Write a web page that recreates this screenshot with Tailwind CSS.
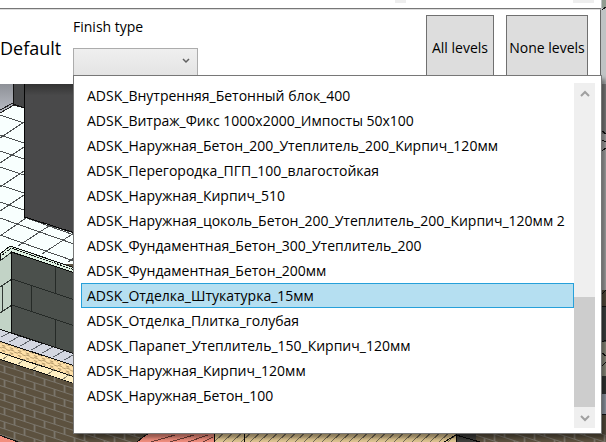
<!DOCTYPE html>
<html lang="ru">
<head>
<meta charset="utf-8">
<meta name="viewport" content="width=device-width, initial-scale=1">
<title>Finish type</title>
<script src="https://cdn.jsdelivr.net/npm/@tailwindcss/browser@4"></script>
</head>
<body class="bg-[#5f5544] font-['Open_Sans','Noto_Sans',sans-serif] text-black">
<main class="relative isolate min-h-screen overflow-hidden pr-[5px]">
  <!-- Model view behind the panel -->
  <svg class="absolute inset-0 -z-10 h-full w-full" viewBox="0 0 606 442" preserveAspectRatio="xMinYMin slice" aria-hidden="true" shape-rendering="crispEdges">
    <defs>
      <linearGradient id="wall" x1="0" y1="0" x2="0" y2="1"><stop offset="0" stop-color="#8e9197"/><stop offset="1" stop-color="#b9bcc5"/></linearGradient>
      <linearGradient id="edge" x1="0" y1="0" x2="0" y2="1"><stop offset="0" stop-color="#333"/><stop offset="1" stop-color="#4a4a4b"/></linearGradient>
      <pattern id="brick" width="20" height="14" patternUnits="userSpaceOnUse" patternTransform="skewY(18)"><path fill="#5c513f" d="M0 0h20v14H0z"/><path fill="none" stroke="#7a756b" d="M0 .5h20M0 7.500h20M4.500 0v7M14.500 7v7"/></pattern>
      <pattern id="hatch" width="9" height="8" patternUnits="userSpaceOnUse"><path stroke="#776d57" d="M0 8L9 0" fill="none"/></pattern>
      <pattern id="sand" width="8" height="5" patternUnits="userSpaceOnUse" patternTransform="skewY(18)"><path stroke="#b79c6d" d="M0 3L4 1L8 3M2 4h3" fill="none"/></pattern>
    </defs>
    <path fill="#f8fffe" d="M0 84h76v180H0z"/>
    <path fill="none" stroke="#4d5152" d="M0 115l24 8M0 135l24 8M0 151l24 8M0 167l24 8M0 185l24 8M0 202l24 8M0 218l74 26M0 235l74 26M24 217l50 18M48 225l26 8M0 138l24-16M0 163l24-16M0 187l24-16M0 211l24-16M0 236l26-18M18 246l31-20M42 254l32-21M68 262l6-4"/>
    <path fill="url(#wall)" d="M0 84h13v21L0 113z"/>
    <path fill="none" stroke="#222" d="M0 113l14-8 10 3M0 110l13-7"/>
    <path fill="#464748" stroke="#111" d="M13.500 83v21l11 4V83z"/>
    <path fill="#49494a" stroke="#050505" d="M24.500 83v134L75 233V83z"/>
    <path fill="url(#edge)" d="M25 84h49v12H25z"/>
    <path fill="#def0e1" stroke="#111" d="M0 254l10-8 65 22v7L12 252 0 261z"/>
    <path fill="none" stroke="#111" stroke-dasharray="2 1" d="M0 257l11-9 64 22"/>
    <path fill="#c2d3c6" d="M0 261l12-9v81L0 329z"/>
    <path fill="none" stroke="#303733" d="M0 287l12-8M2.500 285v26M0 313l12-8M0 261l12-9"/>
    <path fill="#4b504c" stroke="#080908" d="M11.500 252L75 273v81l-63.500-21z"/>
    <path fill="none" stroke="#252a27" d="M12 279l63 21M12 305l63 21M55.500 267v27M31.500 286v26M55.500 320v27"/>
    <path fill="#d4d7e1" stroke="#111" d="M-1 329l76 25v12L-1 341z"/>
    <path fill="none" stroke="#60656c" d="M1 337l8-4M9 342l11-6M20 346l11-6M31 350l11-6M42 353l11-6M53 357l11-6M64 360l11-6"/>
    <path fill="#ffe0a8" stroke="#111" d="M-1 341l76 25v11L-1 352z"/>
    <path fill="url(#sand)" d="M0 342l75 25v9L0 351z"/>
    <path fill="#ffefc2" stroke="#111" d="M-1 352l76 25v7L-1 359z"/>
    <path fill="none" stroke="#8c856f" d="M3 359l7-5M18 364l7-5M33 369l7-5M48 374l7-5M63 379l7-5"/>
    <path fill="url(#brick)" d="M0 360l75 24v40h80v18H0z"/>
    <path fill="#f28f7e" stroke="#111" d="M-1 435l22 8H-1z"/>
    <path fill="#f28f7e" stroke="#111" d="M136 443q6-6 13-10h65v10z"/>
    <path fill="none" stroke="#6d3d35" d="M151 442l24-7M170 442l24-7M188 442l20-7M203 442l10-5"/>
    <path fill="#dfc691" d="M215 432h242v10H215z"/>
    <path fill="url(#hatch)" d="M215 432h242v10H215z"/>
    <path fill="#3f3f3c" d="M456 432h25v10h-25z"/>
    <path fill="url(#brick)" d="M476 434h130v8H476z"/>
    <path fill="none" stroke="#080808" d="M214.500 434v8M244.500 434v8M456.500 434v8M444 442l12-7 24 7"/>
    <path fill="#bfc3c4" d="M601 0h5v130h-5z"/>
    <path fill="#919d91" d="M602 0h4v8h-4z"/>
    <path fill="#8c8c8c" d="M602 84h4v50h-4z"/>
    <path fill="#b9b9b9" d="M602 134h4v156h-4z"/>
    <path fill="#444a48" d="M602 306h4v36h-4z"/>
    <path fill="#9d9e8c" d="M602 342h4v34h-4z"/>
    <path fill="#383a39" d="M602 376h4v18h-4z"/>
    <path fill="#a5adba" d="M602 394h4v20h-4z"/>
    <path stroke="#111" fill="none" d="M602 10l4-3M602 131l4 3M602 140l4 2M602 151l4-3M602 294l4-4M602 306h4M602 342l4-2M602 353l4 3M602 366l4-4M602 414h4"/>
  </svg>

  <div class="flex h-[9px] justify-end gap-[167px] border-b border-[#777] bg-white pr-[7px]">
    <span class="h-[3px] w-[11px] bg-[#eee]"></span>
    <span class="h-[3px] w-[21px] bg-[#eee]"></span>
  </div>
  <header class="flex h-[75px] border-r border-t border-r-[#666] border-t-[#ddd] bg-white">
    <p class="w-[73px] shrink-0 pt-[26px] text-[18px] leading-6">Default</p>
    <div class="flex w-[125px] flex-col gap-[11px] pt-[7px]">
      <label for="finish" class="text-[14px] leading-5">Finish type</label>
      <div class="relative">
        <select id="finish" class="block h-7 w-full appearance-none border border-[#acacac] bg-linear-to-b from-[#efefef] to-[#e4e4e4]"><option></option></select>
        <svg class="pointer-events-none absolute right-2 top-[10px] h-[6px] w-2" viewBox="0 0 8 6" fill="none" stroke="#606060" stroke-width="1.500" aria-hidden="true"><path d="M1 1l3 3 3-3"/></svg>
      </div>
    </div>
    <div class="ml-auto flex gap-3 pr-3 pt-[5px]">
      <button class="h-[65px] w-[68px] whitespace-nowrap border border-[#707070] bg-[#ddd] text-[14px]">All levels</button>
      <button class="flex h-[65px] w-[82px] items-center justify-center whitespace-nowrap border border-[#707070] bg-[#ddd] text-[14px]">None levels</button>
    </div>
  </header>

  <!-- Open list of the Finish type box -->
  <div class="absolute left-[73px] right-1 top-[75px] flex border border-[#777] bg-white pb-[5px] pl-[7px] pr-[6px] pt-[7px] shadow-[4px_4px_4px_rgba(0,0,0,0.4)]">
    <div role="listbox" aria-label="Finish type" class="flex min-w-0 grow flex-col pb-5 text-[14px] leading-[23px] *:block *:w-full *:overflow-hidden *:whitespace-nowrap *:border *:px-[5px] *:text-left">
      <button role="option" class="border-transparent">ADSK_Внутренняя_Бетонный блок_400</button>
      <button role="option" class="border-transparent">ADSK_Витраж_Фикс 1000x2000_Импосты 50x100</button>
      <button role="option" class="border-transparent">ADSK_Наружная_Бетон_200_Утеплитель_200_Кирпич_120мм</button>
      <button role="option" class="border-transparent">ADSK_Перегородка_ПГП_100_влагостойкая</button>
      <button role="option" class="border-transparent">ADSK_Наружная_Кирпич_510</button>
      <button role="option" class="border-transparent">ADSK_Наружная_цоколь_Бетон_200_Утеплитель_200_Кирпич_120мм 2</button>
      <button role="option" class="border-transparent">ADSK_Фундаментная_Бетон_300_Утеплитель_200</button>
      <button role="option" class="border-transparent">ADSK_Фундаментная_Бетон_200мм</button>
      <button role="option" aria-selected="true" class="border-[#26a0da] bg-[#b5dff1]">ADSK_Отделка_Штукатурка_15мм</button>
      <button role="option" class="border-transparent">ADSK_Отделка_Плитка_голубая</button>
      <button role="option" class="border-transparent">ADSK_Парапет_Утеплитель_150_Кирпич_120мм</button>
      <button role="option" class="border-transparent">ADSK_Наружная_Кирпич_120мм</button>
      <button role="option" class="border-transparent">ADSK_Наружная_Бетон_100</button>
    </div>
    <div class="flex w-[21px] shrink-0 flex-col bg-[#efefef]">
      <button aria-label="Scroll up" class="flex h-[21px] items-center justify-center"><svg class="h-2 w-[10px]" viewBox="0 0 10 8" fill="none" stroke="#a0a0a0" stroke-width="2" aria-hidden="true"><path d="M1 6l4-4 4 4"/></svg></button>
      <div class="flex grow flex-col justify-end"><span class="h-[110px] bg-[#cdcdcd]"></span></div>
      <button aria-label="Scroll down" class="flex h-[21px] items-center justify-center"><svg class="h-2 w-[10px]" viewBox="0 0 10 8" fill="none" stroke="#a0a0a0" stroke-width="2" aria-hidden="true"><path d="M1 2l4 4 4-4"/></svg></button>
    </div>
  </div>
</main>
</body>
</html>
